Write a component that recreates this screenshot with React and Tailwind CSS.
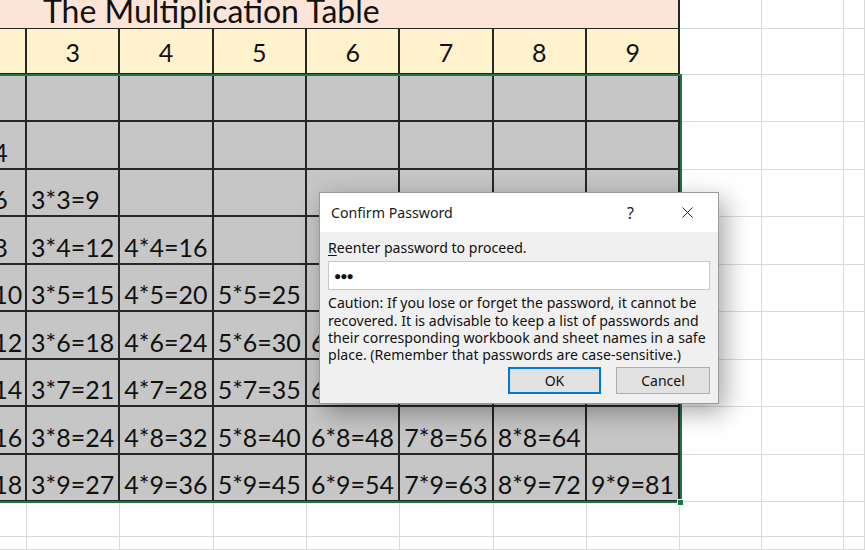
import React from "react";
import { X } from "lucide-react";

const FONT_SHEET = { fontFamily: "Lato, 'Open Sans', sans-serif" };

const HEAD = [3, 4, 5, 6, 7, 8, 9];
const ROWS = [1, 2, 3, 4, 5, 6, 7, 8, 9];

function Blank() {
  return <div className="border-r border-b border-[#d9d9d9] bg-white" />;
}

function RightBlanks() {
  return (
    <>
      <Blank />
      <Blank />
      <Blank />
    </>
  );
}

function DataCell({ text }) {
  return (
    <div className="flex items-end overflow-hidden whitespace-nowrap border-r-2 border-b-2 border-[#262626] bg-[#c6c6c6] pb-[3px] pl-[4px] text-[25px] leading-none text-[#111]">
      {text}
    </div>
  );
}

function Sheet() {
  return (
    <div
      className="grid h-[550px] w-[865px] grid-cols-[27px_repeat(7,93.33px)_82px_82px_1fr] grid-rows-[29px_46px_repeat(9,47.44px)_35px_1fr]"
      style={FONT_SHEET}
    >
      {/* title */}
      <div className="col-span-8 flex items-end overflow-hidden border-r-2 border-b border-[#262626] bg-[#fce4d6] pl-[43px]">
        <span className="mb-[1px] whitespace-nowrap text-[32px] leading-none text-[#111]">
          The Multiplication Table
        </span>
      </div>
      <RightBlanks />

      {/* header */}
      <div className="border-r-2 border-b-2 border-[#262626] bg-[#fff2cc]" />
      {HEAD.map((n) => (
        <div
          key={n}
          className="flex items-center justify-center border-r-2 border-b-2 border-[#262626] bg-[#fff2cc] pt-[2px] text-[25px] leading-none text-[#111]"
        >
          {n}
        </div>
      ))}
      <RightBlanks />

      {/* data */}
      {ROWS.map((m) => (
        <React.Fragment key={m}>
          <div className="flex items-end overflow-hidden whitespace-nowrap border-r-2 border-b-2 border-[#262626] bg-[#c6c6c6] pb-[3px] text-[25px] leading-none text-[#111]">
            <span className="ml-[-61px]">{m >= 2 ? `2*${m}=${2 * m}` : ""}</span>
          </div>
          {HEAD.map((n) => (
            <DataCell key={n} text={n <= m ? `${n}*${m}=${n * m}` : ""} />
          ))}
          <RightBlanks />
        </React.Fragment>
      ))}

      {/* empty rows below */}
      {Array.from({ length: 22 }).map((_, i) => (
        <Blank key={i} />
      ))}
    </div>
  );
}

function ConfirmDialog() {
  return (
    <div
      className="absolute left-[319px] top-[192px] flex h-[212px] w-[400px] flex-col border border-[#9a9a9a] bg-[#f0f0f0] shadow-[6px_8px_24px_rgba(0,0,0,0.35)]"
      style={{ fontFamily: "'Noto Sans', 'Open Sans', sans-serif" }}
    >
      <div className="flex h-[39px] items-center bg-white pl-[11px] pr-[21px] text-[14.2px] text-[#1a1a1a]">
        <span className="flex-1">Confirm Password</span>
        <span className="mr-[44px] text-[16px]">?</span>
        <X className="h-[19px] w-[19px]" strokeWidth={1.2} />
      </div>
      <div className="flex flex-1 flex-col px-[8px] pt-[7px] text-[14.1px] leading-[17.3px] text-[#111]">
        <div>
          <span className="underline underline-offset-2">R</span>eenter password to proceed.
        </div>
        <div className="mt-[5px] flex h-[29px] items-center border border-[#c8c8c8] bg-white pl-[5px] text-[12px] tracking-[-1px]">
          ●●●
        </div>
        <div className="mt-[4px] whitespace-nowrap">
          <div>Caution: If you lose or forget the password, it cannot be</div>
          <div>recovered. It is advisable to keep a list of passwords and</div>
          <div>their corresponding workbook and sheet names in a safe</div>
          <div>place. (Remember that passwords are case-sensitive.)</div>
        </div>
        <div className="mt-[4px] flex justify-end gap-[15px]">
          <button className="flex h-[27px] w-[93px] items-center justify-center border-2 border-[#0078d7] bg-[#e1e1e1] text-[14px]">
            OK
          </button>
          <button className="flex h-[27px] w-[94px] items-center justify-center border border-[#adadad] bg-[#e1e1e1] text-[14px]">
            Cancel
          </button>
        </div>
      </div>
    </div>
  );
}

export default function App() {
  return (
    <div className="relative h-[550px] w-[865px] overflow-hidden bg-white">
      <Sheet />
      {/* selection outline */}
      <div className="pointer-events-none absolute left-[-4px] top-[74px] h-[429px] w-[686px] border-2 border-[#217346]" />
      <div className="absolute left-[677px] top-[499px] h-[7px] w-[7px] border border-white bg-[#217346]" />
      <ConfirmDialog />
    </div>
  );
}
